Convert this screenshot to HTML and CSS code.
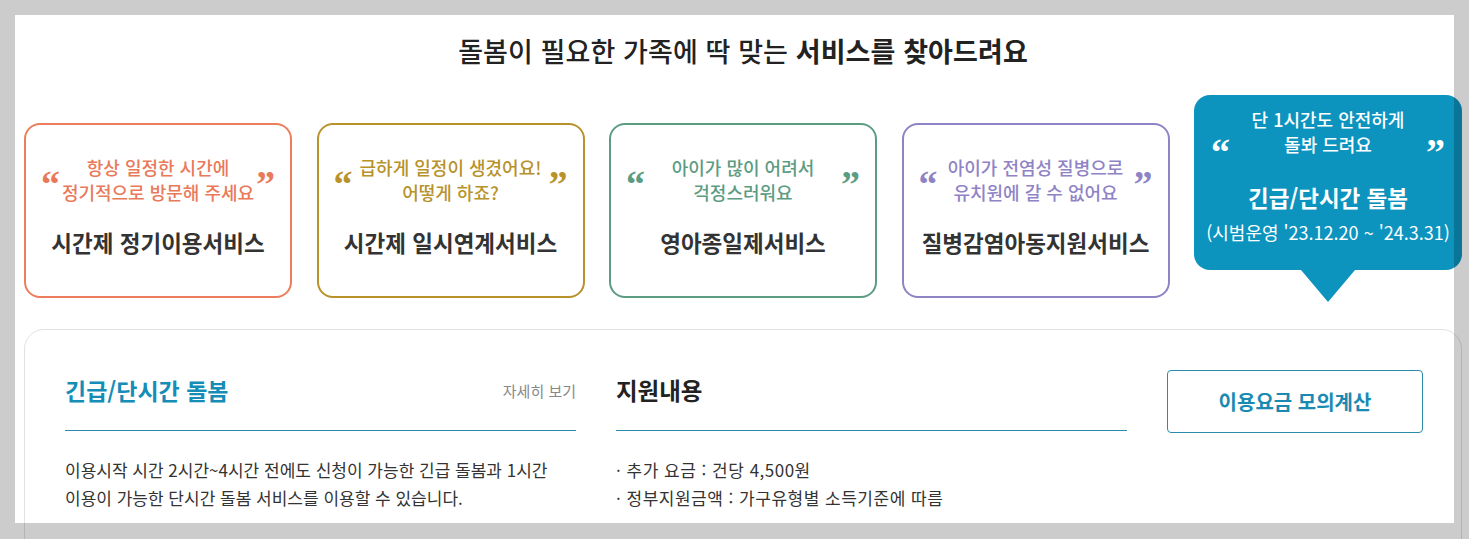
FILE: index.html
```html
<!DOCTYPE html>
<html lang="ko">
<head>
<meta charset="utf-8">
<title>돌봄 서비스</title>
<link rel="stylesheet" href="styles.css">
</head>
<body>
<div class="page">
  <h1 class="title">돌봄이 필요한 가족에 딱 맞는 <strong>서비스를 찾아드려요</strong></h1>
  <ul class="cards">
    <li class="card card--orange">
      <span class="q q-l">“</span>
      <p class="card-desc">항상 일정한 시간에<br>정기적으로 방문해 주세요</p>
      <span class="q q-r">”</span>
      <p class="card-name">시간제 정기이용서비스</p>
    </li>
    <li class="card card--gold">
      <span class="q q-l">“</span>
      <p class="card-desc">급하게 일정이 생겼어요!<br>어떻게 하죠?</p>
      <span class="q q-r">”</span>
      <p class="card-name">시간제 일시연계서비스</p>
    </li>
    <li class="card card--green">
      <span class="q q-l">“</span>
      <p class="card-desc">아이가 많이 어려서<br>걱정스러워요</p>
      <span class="q q-r">”</span>
      <p class="card-name">영아종일제서비스</p>
    </li>
    <li class="card card--purple">
      <span class="q q-l">“</span>
      <p class="card-desc">아이가 전염성 질병으로<br>유치원에 갈 수 없어요</p>
      <span class="q q-r">”</span>
      <p class="card-name">질병감염아동지원서비스</p>
    </li>
    <li class="card card--active">
      <span class="q q-l">“</span>
      <p class="card-desc">단 1시간도 안전하게<br>돌봐 드려요</p>
      <span class="q q-r">”</span>
      <p class="card-name">긴급/단시간 돌봄</p>
      <p class="card-sub">(시범운영 '23.12.20 ~ '24.3.31)</p>
    </li>
  </ul>
  <section class="detail">
    <div class="col">
      <div class="col-head">
        <h2 class="col-title col-title--blue">긴급/단시간 돌봄</h2>
        <a class="more" href="#">자세히 보기</a>
      </div>
      <p class="col-text">이용시작 시간 2시간~4시간 전에도 신청이 가능한 긴급 돌봄과 1시간<br>이용이 가능한 단시간 돌봄 서비스를 이용할 수 있습니다.</p>
    </div>
    <div class="col">
      <div class="col-head">
        <h2 class="col-title">지원내용</h2>
      </div>
      <ul class="col-list">
        <li>· 추가 요금 : 건당 4,500원</li>
        <li>· 정부지원금액 : 가구유형별 소득기준에 따름</li>
      </ul>
    </div>
    <a class="calc-btn" href="#">이용요금 모의계산</a>
  </section>
</div>
<div class="frame"></div>
</body>
</html>
```
FILE: styles.css
```css
html, body {
  margin: 0;
  padding: 0;
  height: 100%;
  overflow: hidden;
  background: #fff;
}
body {
  font-family: "Noto Sans CJK KR", "Noto Sans", sans-serif;
  color: #222;
}
.page {
  width: 1438px;
  padding-left: 24px;
}
.title {
  margin: 0;
  padding-top: 33px;
  font-size: 27px;
  line-height: 36px;
  font-weight: 500;
  letter-spacing: 0.1px;
  text-align: center;
  color: #222;
}
.title strong {
  font-weight: 700;
}
.cards {
  list-style: none;
  margin: 26px 0 0;
  padding: 0;
  display: flex;
  align-items: flex-start;
  gap: 24.5px;
}
.card {
  flex: 1 1 0;
  height: 175px;
  box-sizing: border-box;
  margin-top: 28px;
  border: 2px solid;
  border-radius: 16px;
  padding: 30px 15px 0;
  display: grid;
  grid-template-columns: auto 1fr auto;
  align-items: start;
  align-content: start;
  position: relative;
}
.q {
  font-family: "Liberation Serif", serif;
  font-weight: 700;
  font-size: 38px;
  line-height: 38px;
  height: 22px;
  margin-top: 10px;
}
.card-desc {
  margin: 0;
  font-size: 18px;
  line-height: 25px;
  font-weight: 500;
  text-align: center;
}
.card-name {
  grid-column: 1 / -1;
  margin: 22px 0 0;
  font-size: 22.5px;
  line-height: 30px;
  font-weight: 700;
  text-align: center;
  color: #333;
}
.card--orange { border-color: #ec7e5d; color: #e9795a; }
.card--gold { border-color: #b8922b; color: #b8922b; }
.card--green { border-color: #5c9c83; color: #5c9c83; }
.card--purple { border-color: #8f83c6; color: #8f83c6; }

.card--active {
  margin-top: 0;
  border: none;
  border-radius: 16px;
  background: #0c94bf;
  color: #fff;
  padding: 12px 17px 0;
}
.card--active::after {
  content: "";
  position: absolute;
  left: 50%;
  bottom: -32px;
  margin-left: -27px;
  border-left: 27px solid transparent;
  border-right: 27px solid transparent;
  border-top: 32px solid #0c94bf;
}
.card--active .q {
  margin-top: 26px;
}
.card--active .card-name {
  color: #fff;
  margin-top: 25px;
}
.card-sub {
  grid-column: 1 / -1;
  margin: 7px -14px 0;
  font-size: 18px;
  line-height: 26px;
  text-align: center;
  white-space: nowrap;
}

.detail {
  margin-top: 31px;
  border: 1px solid #e2e2e2;
  border-radius: 20px;
  padding: 40px 39px 80px 40px;
  display: flex;
  gap: 40px;
  align-items: flex-start;
}
.col {
  flex: 0 0 511px;
  padding-top: 5px;
}
.col-head {
  display: flex;
  justify-content: space-between;
  align-items: center;
  padding-bottom: 25px;
  border-bottom: 1px solid #2a89a8;
}
.col-title {
  margin: 0;
  font-size: 23.5px;
  line-height: 30px;
  font-weight: 700;
  color: #222;
}
.col-title--blue {
  color: #158db7;
  font-size: 23px;
}
.more {
  font-size: 15px;
  color: #888;
  text-decoration: none;
}
.col-text {
  margin: 25px 0 0;
  font-size: 17px;
  line-height: 28px;
  color: #333;
}
.col-list {
  list-style: none;
  margin: 25px 0 0;
  padding: 0;
  font-size: 17px;
  line-height: 28px;
  letter-spacing: 0.5px;
  color: #333;
}
.calc-btn {
  flex: 0 0 256px;
  height: 63px;
  box-sizing: border-box;
  border: 1px solid #2a8aa8;
  border-radius: 4px;
  display: flex;
  align-items: center;
  justify-content: center;
  font-size: 20px;
  font-weight: 700;
  color: #1a8ab3;
  text-decoration: none;
}
.frame {
  position: fixed;
  top: 15px;
  left: 15px;
  right: 15px;
  bottom: 16px;
  box-shadow: 0 0 0 2000px rgba(0, 0, 0, 0.2);
  pointer-events: none;
}
```
